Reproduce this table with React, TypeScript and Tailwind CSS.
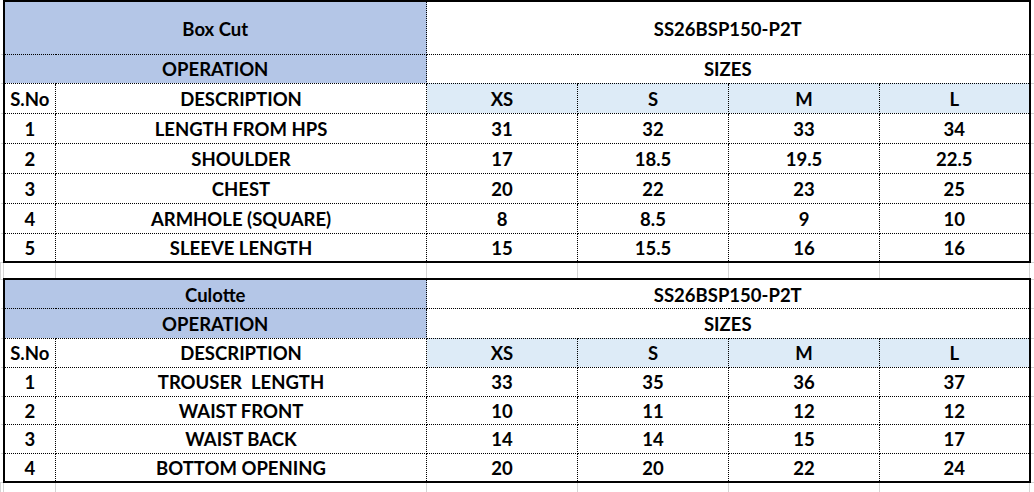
const FONT = 'font-[family-name:Lato,"Liberation_Sans",sans-serif] font-bold text-[18.5px] leading-none text-black'

// excel grid cell outside the measurement blocks
const grid = 'border border-solid border-[#d4d4d4] p-0'
// dotted cell inside a block
const cell = 'border border-dotted border-black p-0 pt-[2px] text-center align-middle'

type Block = {
  title: string
  style: string
  rows: { no: number; desc: string; vals: string[] }[]
  heights: number[]
}

const SIZES = ['XS', 'S', 'M', 'L']

const BLOCKS: Block[] = [
  {
    title: 'Box Cut',
    style: 'SS26BSP150-P2T',
    heights: [53, 29, 30, 30, 30, 30, 30, 29],
    rows: [
      { no: 1, desc: 'LENGTH FROM HPS', vals: ['31', '32', '33', '34'] },
      { no: 2, desc: 'SHOULDER', vals: ['17', '18.5', '19.5', '22.5'] },
      { no: 3, desc: 'CHEST', vals: ['20', '22', '23', '25'] },
      { no: 4, desc: 'ARMHOLE (SQUARE)', vals: ['8', '8.5', '9', '10'] },
      { no: 5, desc: 'SLEEVE LENGTH', vals: ['15', '15.5', '16', '16'] },
    ],
  },
  {
    title: 'Culotte',
    style: 'SS26BSP150-P2T',
    heights: [29, 30, 29, 29, 28, 29, 29],
    rows: [
      { no: 1, desc: 'TROUSER  LENGTH', vals: ['33', '35', '36', '37'] },
      { no: 2, desc: 'WAIST FRONT', vals: ['10', '11', '12', '12'] },
      { no: 3, desc: 'WAIST BACK', vals: ['14', '14', '15', '17'] },
      { no: 4, desc: 'BOTTOM OPENING', vals: ['20', '20', '22', '24'] },
    ],
  },
]

const leftEdge = 'border-b border-solid border-[#d4d4d4] border-r-2 border-r-black p-0'
const rightEdge = 'border-b border-solid border-[#d4d4d4] border-l-2 border-l-black p-0'

function BlockRows({ block, first }: { block: Block; first: boolean }) {
  const top = first ? '[border-top:2px_solid_#000]' : ''
  const h = block.heights
  return (
    <>
      <tr style={{ height: h[0] }}>
        <td className={leftEdge} />
        <td colSpan={2} className={`${cell} ${top} bg-[#b4c6e7]`}>{block.title}</td>
        <td colSpan={4} className={`${cell} ${top}`}>{block.style}</td>
        <td className={rightEdge} />
      </tr>
      <tr style={{ height: h[1] }}>
        <td className={leftEdge} />
        <td colSpan={2} className={`${cell} bg-[#b4c6e7]`}>OPERATION</td>
        <td colSpan={4} className={cell}>SIZES</td>
        <td className={rightEdge} />
      </tr>
      <tr style={{ height: h[2] }}>
        <td className={leftEdge} />
        <td className={cell}>S.No</td>
        <td className={cell}>DESCRIPTION</td>
        {SIZES.map((s) => (
          <td key={s} className={`${cell} bg-[#ddebf7]`}>{s}</td>
        ))}
        <td className={rightEdge} />
      </tr>
      {block.rows.map((r, i) => (
        <tr key={r.no} style={{ height: h[3 + i] }}>
          <td className={leftEdge} />
          <td className={cell}>{r.no}</td>
          <td className={`${cell} whitespace-pre`}>{r.desc}</td>
          {r.vals.map((v, j) => (
            <td key={j} className={cell}>{v}</td>
          ))}
          <td className={rightEdge} />
        </tr>
      ))}
    </>
  )
}

export default function App() {
  const gapMid = 'border-x border-solid border-[#d4d4d4] border-y-2 border-y-black p-0'
  const below = 'border-x border-b border-solid border-[#d4d4d4] border-t-2 border-t-black p-0'
  return (
    <div className={`w-[1034px] h-[492px] overflow-hidden bg-white ${FONT}`}>
      <table className="table-fixed border-collapse w-[1069px]">
        <colgroup>
          <col className="w-[3px]" />
          <col className="w-[52px]" />
          <col className="w-[371px]" />
          <col className="w-[151px]" />
          <col className="w-[151px]" />
          <col className="w-[151px]" />
          <col className="w-[150px]" />
          <col className="w-[40px]" />
        </colgroup>
        <tbody>
          <BlockRows block={BLOCKS[0]} first />
          <tr className="h-[17px]">
            <td className={grid} />
            {[0, 1, 2, 3, 4, 5].map((i) => (
              <td key={i} className={gapMid} />
            ))}
            <td className={grid} />
          </tr>
          <BlockRows block={BLOCKS[1]} first={false} />
          <tr className="h-[20px]">
            <td className={grid} />
            {[0, 1, 2, 3, 4, 5].map((i) => (
              <td key={i} className={below} />
            ))}
            <td className={grid} />
          </tr>
        </tbody>
      </table>
    </div>
  )
}
